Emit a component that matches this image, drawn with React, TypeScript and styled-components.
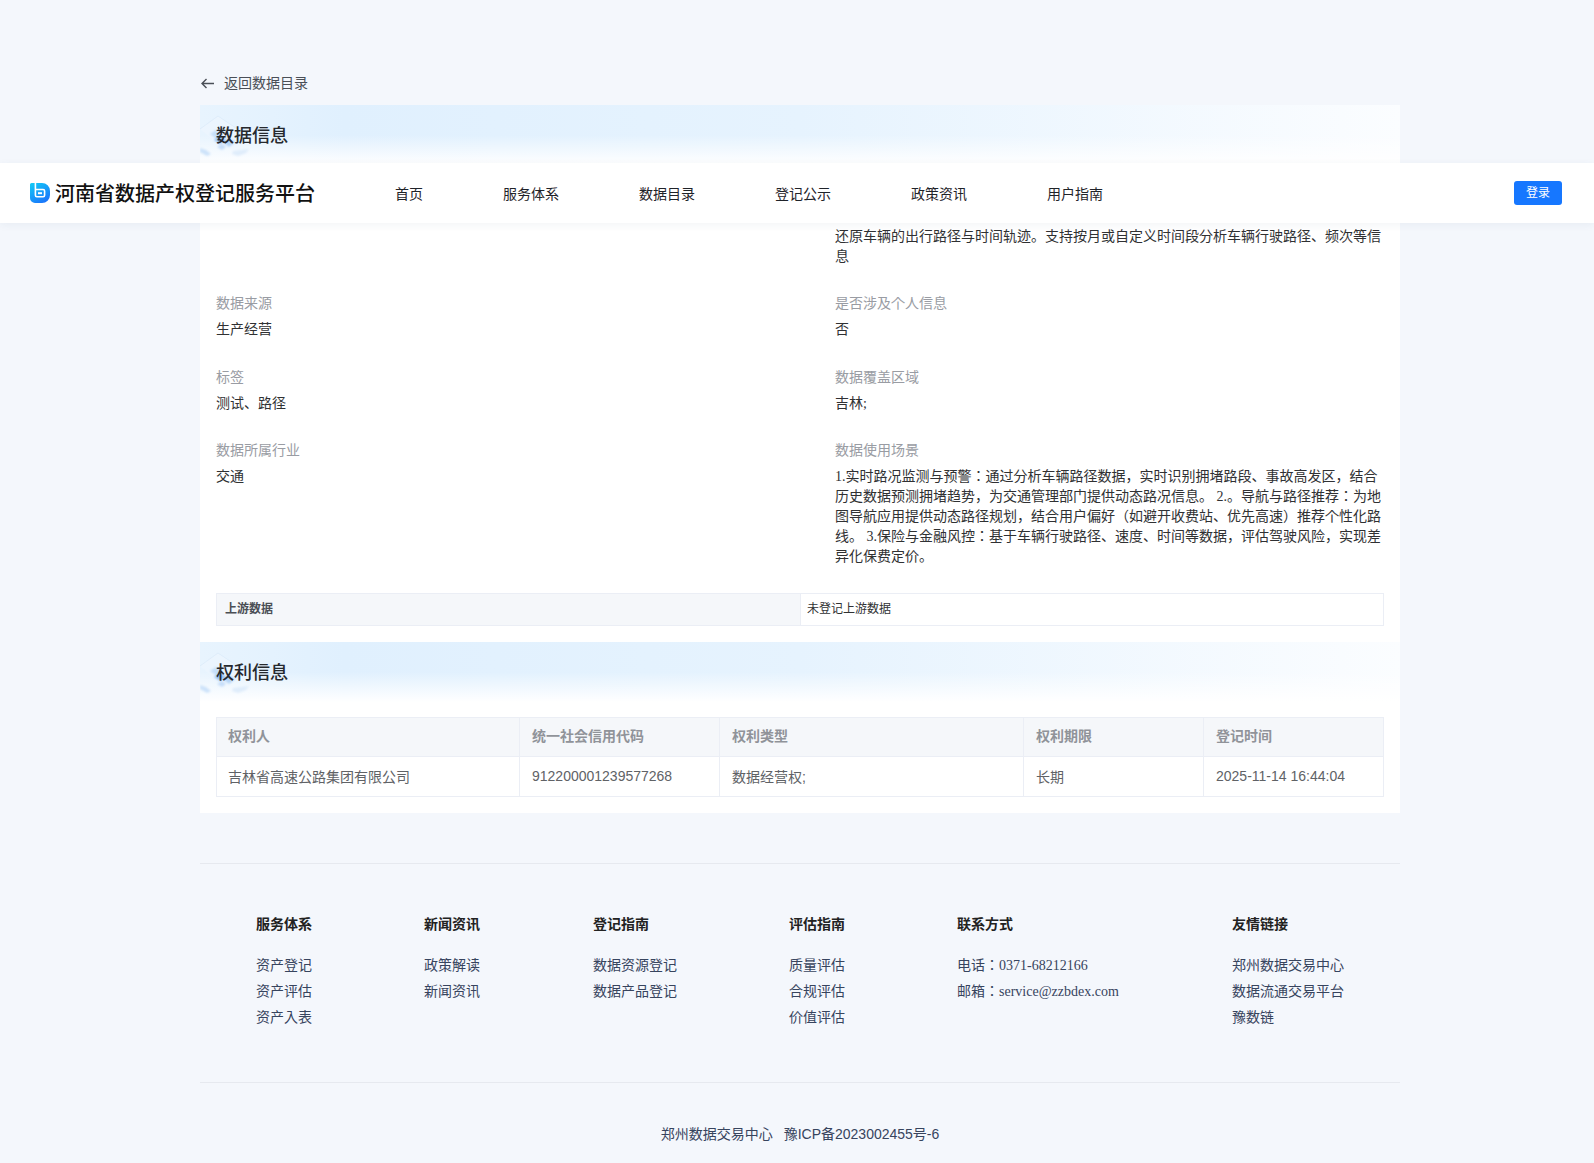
import { createGlobalStyle, styled } from 'styled-components'

const GlobalStyle = createGlobalStyle`
  html, body {
    margin: 0;
    padding: 0;
    background: #f4f7fc;
    font-family: "Liberation Serif", "Noto Sans CJK JP", serif;
  }
`

const Page = styled.div`
  position: relative;
  width: 100%;
  height: 1163px;
  overflow: hidden;
  padding: 72px 194px 0 200px;
  box-sizing: border-box;
`

const Header = styled.header`
  position: absolute;
  top: 163px;
  left: 0;
  right: 0;
  height: 60px;
  padding: 0 32px 0 30px;
  background: #fff;
  box-shadow: 0 2px 8px rgba(40, 60, 100, 0.06);
  display: flex;
  align-items: center;
  z-index: 10;
`

const Brand = styled.div`
  display: flex;
  align-items: center;
  gap: 5px;
  width: 365px;
  font-family: "Noto Sans CJK JP", sans-serif;
  font-size: 20px;
  font-weight: 500;
  color: #111;
`

const BrandName = styled.span`
  padding-bottom: 2px;
`

const Nav = styled.nav`
  display: flex;
  gap: 80px;
  flex: 1;
`

const NavItem = styled.a`
  font-size: 14px;
  color: #1f2329;
`

const LoginButton = styled.button`
  width: 48px;
  height: 24px;
  padding: 0 0 2px;
  border: 0;
  border-radius: 3px;
  background: #1677ff;
  color: #fff;
  font-family: "Liberation Serif", "Noto Sans CJK JP", serif;
  font-size: 12px;
`

const BackLink = styled.a`
  display: flex;
  align-items: center;
  gap: 9px;
  height: 20px;
  margin-bottom: 13px;
  font-size: 14px;
  color: #4a4f57;

  svg {
    margin-top: 2px;
  }
`

const Card = styled.section`
  width: 1200px;
  background: #fff;
  padding-bottom: 16px;
`

const SectionHead = styled.div`
  position: relative;
  height: 60px;
  padding-left: 16px;
  display: flex;
  align-items: center;
  padding-bottom: 3px;
  box-sizing: border-box;
  background:
    linear-gradient(180deg, rgba(255, 255, 255, 0) 50%, #fff 100%),
    linear-gradient(90deg, #e8f4fe 0%, #e0f0fe 12%, #e6f3fe 50%, #fbfdff 100%);
`

const SectionTitle = styled.h2`
  position: relative;
  margin: 0;
  font-size: 18px;
  font-weight: 500;
  color: #26292e;
`

const Corner = styled.svg`
  position: absolute;
  left: 0;
  top: 0;
`

const InfoGrid = styled.div`
  display: grid;
  grid-template-columns: 1fr 1fr;
  column-gap: 70px;
  padding: 35.7px 16px 0;
`

const Field = styled.div`
  display: flex;
  flex-direction: column;
  gap: 6px;
  padding-bottom: 27.5px;
`

const Label = styled.div`
  font-size: 14px;
  line-height: 20px;
  color: #999ca3;
`

const Value = styled.div`
  font-size: 14px;
  line-height: 20px;
  color: #303133;
`

const Upstream = styled.div`
  display: grid;
  grid-template-columns: 584px 1fr;
  margin: -1.7px 16px 16px;
  height: 33px;
  border: 1px solid #ebeef5;
  box-sizing: border-box;
  font-size: 12px;
  line-height: 30px;
`

const UpstreamLabel = styled.div`
  padding-left: 8px;
  background: #f5f7fa;
  border-right: 1px solid #ebeef5;
  font-weight: 700;
  color: #4b4f56;
`

const UpstreamValue = styled.div`
  padding-left: 6px;
  color: #303133;
`

const RightsTable = styled.table`
  width: 1167px;
  margin: 15px 16px 0;
  border-collapse: collapse;
  table-layout: fixed;
  font-family: "Liberation Sans", "Noto Sans CJK JP", sans-serif;
  font-size: 14px;

  th, td {
    padding: 0 11px 2px 12px;
    box-sizing: border-box;
    border: 1px solid #ebeef5;
    text-align: left;
  }

  th:first-child, td:first-child {
    padding-left: 11px;
  }

  th {
    height: 39px;
    padding-bottom: 4px;
    background: #f5f7fa;
    color: #909399;
    font-weight: 700;
  }

  td {
    height: 40px;
    color: #606266;
  }
`

const Footer = styled.footer`
  width: 1200px;
  margin-top: 50px;
  border-top: 1px solid #e6e9ef;
`

const FooterColumns = styled.div`
  display: grid;
  grid-template-columns: 168px 169px 196px 168px 275px 1fr;
  padding: 48px 0 0 56px;
  height: 170px;
  border-bottom: 1px solid #e6e9ef;
`

const FooterColumn = styled.div`
  display: flex;
  flex-direction: column;
  font-size: 14px;
  line-height: 26px;
  color: #37445e;
`

const FooterHeading = styled.div`
  font-size: 14px;
  font-weight: 700;
  color: #222;
  margin-bottom: 15px;
`

const Copyright = styled.div`
  padding-top: 41px;
  display: flex;
  justify-content: center;
  gap: 11px;
  font-family: "Liberation Sans", "Noto Sans CJK JP", sans-serif;
  font-size: 14px;
  line-height: 20px;
  color: #37445e;
`

const NAV = ['首页', '服务体系', '数据目录', '登记公示', '政策资讯', '用户指南']

const FIELDS = [
  {
    label: '数据来源',
    value: '生产经营',
  },
  {
    label: '是否涉及个人信息',
    value: '否',
  },
  {
    label: '标签',
    value: '测试、路径',
  },
  {
    label: '数据覆盖区域',
    value: '吉林;',
  },
  {
    label: '数据所属行业',
    value: '交通',
  },
  {
    label: '数据使用场景',
    value:
      '1.实时路况监测与预警：通过分析车辆路径数据，实时识别拥堵路段、事故高发区，结合历史数据预测拥堵趋势，为交通管理部门提供动态路况信息。 2.。导航与路径推荐：为地图导航应用提供动态路径规划，结合用户偏好（如避开收费站、优先高速）推荐个性化路线。 3.保险与金融风控：基于车辆行驶路径、速度、时间等数据，评估驾驶风险，实现差异化保费定价。',
  },
]

const FOOTER = [
  { title: '服务体系', items: ['资产登记', '资产评估', '资产入表'] },
  { title: '新闻资讯', items: ['政策解读', '新闻资讯'] },
  { title: '登记指南', items: ['数据资源登记', '数据产品登记'] },
  { title: '评估指南', items: ['质量评估', '合规评估', '价值评估'] },
  { title: '联系方式', items: ['电话：0371-68212166', '邮箱：service@zzbdex.com'] },
  { title: '友情链接', items: ['郑州数据交易中心', '数据流通交易平台', '豫数链'] },
]

const Logo = () => (
  <svg width="20" height="20" viewBox="0 0 20 20">
    <defs>
      <linearGradient id="logo" x1="0" y1="0" x2="0.6" y2="1">
        <stop offset="0" stopColor="#12cdf6" />
        <stop offset="1" stopColor="#1a78fb" />
      </linearGradient>
    </defs>
    <path d="M0 1.5A1.5 1.5 0 0 1 1.5 0H12a8 8 0 0 1 8 8v4a8 8 0 0 1-8 8H5a5 5 0 0 1-5-5z" fill="url(#logo)" />
    <path d="M5.4 0v12.2a1.5 1.5 0 0 0 1.5 1.5h6.2a1.5 1.5 0 0 0 1.5-1.5V8a1.5 1.5 0 0 0-1.5-1.5H5.4" fill="none" stroke="#fff" strokeWidth="1.6" />
    <rect x="8" y="9.2" width="4" height="2" fill="#fff" />
  </svg>
)

const BackArrow = () => (
  <svg width="15" height="15" viewBox="0 0 15 15" fill="none" stroke="#4a4f57" strokeWidth="1.4">
    <path d="M14 7.5H2M6.5 3L2 7.5 6.5 12" />
  </svg>
)

// faint tech pattern behind the section titles
const SectionCorner = () => (
  <Corner width="60" height="60" viewBox="0 0 60 60">
    <defs>
      <filter id="soft">
        <feGaussianBlur stdDeviation="1" />
      </filter>
    </defs>
    <path d="M0 24L18 11l24 16-18 17z" fill="#eef6fe" opacity="0.55" />
    <path d="M0 24L18 11l24 16" fill="none" stroke="#d6e7f9" strokeWidth="0.6" />
    <g filter="url(#soft)">
      <path d="M10 29l6-4 7 4-6 5z" fill="#b5d5f7" opacity="0.7" />
      <path d="M14 35l6-5 6 5-6 4z" fill="#78aff0" opacity="0.75" />
      <path d="M23 37l6-4 6 4-6 5z" fill="#97c1f3" opacity="0.65" />
      <path d="M17 42l5-3 4 3-4 3z" fill="#a9ccf6" opacity="0.6" />
      <path d="M0 43l6 2 5 4-4 2-7-4z" fill="#bcd9f8" opacity="0.7" />
      <path d="M33 46l16-2-3 4-8 3-6-2z" fill="#d6e7fa" opacity="0.7" />
    </g>
  </Corner>
)

const Section = ({ title }: { title: string }) => (
  <SectionHead>
    <SectionCorner />
    <SectionTitle>{title}</SectionTitle>
  </SectionHead>
)

export default function App() {
  return (
    <Page>
      <GlobalStyle />
      <Header>
        <Brand>
          <Logo />
          <BrandName>河南省数据产权登记服务平台</BrandName>
        </Brand>
        <Nav>
          {NAV.map((item) => (
            <NavItem key={item}>{item}</NavItem>
          ))}
        </Nav>
        <LoginButton>登录</LoginButton>
      </Header>

      <BackLink>
        <BackArrow />
        返回数据目录
      </BackLink>

      <Card>
        <Section title="数据信息" />
        <InfoGrid>
          <Field />
          <Field>
            <Label>数据简介</Label>
            <Value>
              还原车辆的出行路径与时间轨迹。支持按月或自定义时间段分析车辆行驶路径、频次等信息
            </Value>
          </Field>
          {FIELDS.map((field) => (
            <Field key={field.label}>
              <Label>{field.label}</Label>
              <Value>{field.value}</Value>
            </Field>
          ))}
        </InfoGrid>
        <Upstream>
          <UpstreamLabel>上游数据</UpstreamLabel>
          <UpstreamValue>未登记上游数据</UpstreamValue>
        </Upstream>

        <Section title="权利信息" />
        <RightsTable>
          <colgroup>
            <col width="303" />
            <col width="200" />
            <col width="304" />
            <col width="180" />
            <col width="180" />
          </colgroup>
          <thead>
            <tr>
              <th>权利人</th>
              <th>统一社会信用代码</th>
              <th>权利类型</th>
              <th>权利期限</th>
              <th>登记时间</th>
            </tr>
          </thead>
          <tbody>
            <tr>
              <td>吉林省高速公路集团有限公司</td>
              <td>912200001239577268</td>
              <td>数据经营权;</td>
              <td>长期</td>
              <td>2025-11-14 16:44:04</td>
            </tr>
          </tbody>
        </RightsTable>
      </Card>

      <Footer>
        <FooterColumns>
          {FOOTER.map((col) => (
            <FooterColumn key={col.title}>
              <FooterHeading>{col.title}</FooterHeading>
              {col.items.map((item) => (
                <div key={item}>{item}</div>
              ))}
            </FooterColumn>
          ))}
        </FooterColumns>
        <Copyright>
          <span>郑州数据交易中心</span>
          <span>豫ICP备2023002455号-6</span>
        </Copyright>
      </Footer>
    </Page>
  )
}
